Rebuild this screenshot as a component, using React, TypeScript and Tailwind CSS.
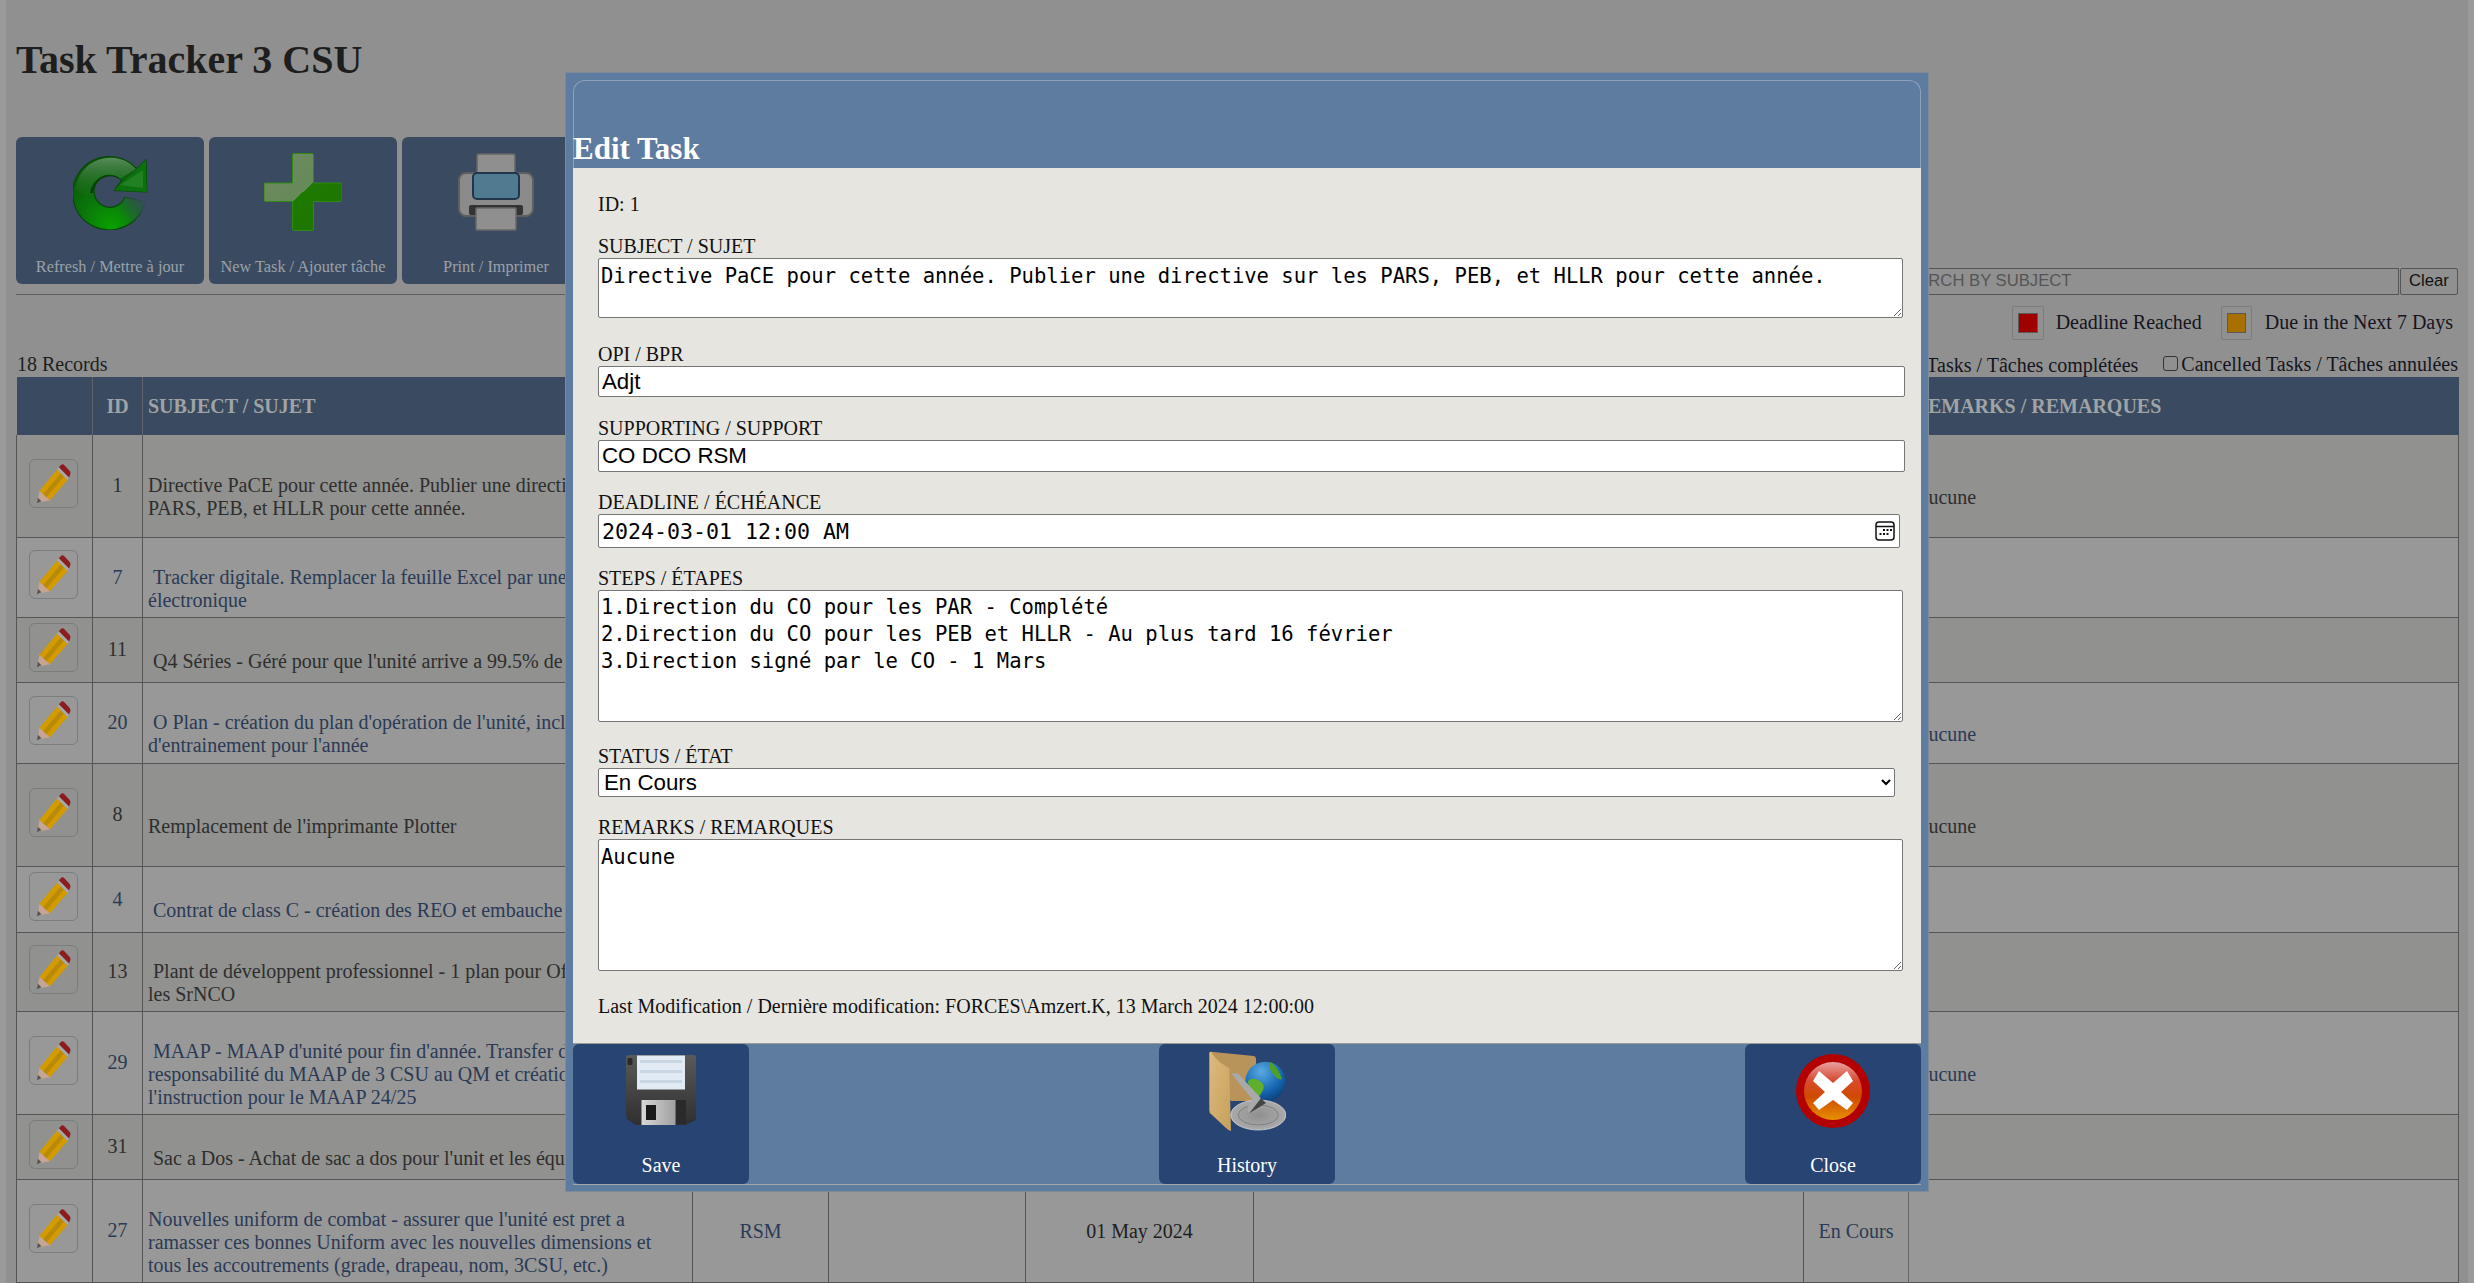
import React from "react";

const serif = "font-['Liberation_Serif',serif]";

function Pencil() {
  return (
    <svg viewBox="15 15 148 148" className="w-full h-full">
      <polygon points="38,150 45,112 78,142" fill="#c7a594" />
      <polygon points="37,151 40,134 51,145" fill="#55524f" />
      <polygon points="45,112 100,45 133,78 78,142" fill="#d49b00" />
      <polygon points="57,122 112,57 122,67 67,132" fill="#b98a05" />
      <polygon points="100,45 106,38 138,70 133,78" fill="#a8a8a6" />
      <path d="M106 38 L113 30 Q118 26 124 32 L140 50 Q145 56 141 62 L138 70 Z" fill="#8c1c1e" />
    </svg>
  );
}

function Refresh() {
  const shape = "M63.7 13.7 A36.7 36.7 0 1 0 72 47 L52 42 A16 16 0 1 1 48.7 25.3 L41.3 35.3 L73.7 37 L73 4.7 Z";
  return (
    <svg viewBox="0 0 75 75" className="w-[75px] h-[75px]">
      <defs>
        <radialGradient id="rf" gradientUnits="userSpaceOnUse" cx="38" cy="72" r="62">
          <stop offset="0" stopColor="#0aa000" />
          <stop offset="0.45" stopColor="#0a7a0a" />
          <stop offset="1" stopColor="#0b560b" />
        </radialGradient>
        <linearGradient id="rg" x1="0" y1="0" x2="0" y2="1">
          <stop offset="0" stopColor="#9ab89a" stopOpacity="0.55" />
          <stop offset="1" stopColor="#2a7a2a" stopOpacity="0.1" />
        </linearGradient>
        <linearGradient id="rfade" gradientUnits="userSpaceOnUse" x1="48" y1="62" x2="74" y2="44">
          <stop offset="0" stopColor="#3a4b61" stopOpacity="0" />
          <stop offset="1" stopColor="#3a4b61" stopOpacity="1" />
        </linearGradient>
      </defs>
      <path d={shape} fill="url(#rf)" stroke="#074a07" strokeWidth="1.2" strokeLinejoin="round" />
      <path d="M63 14 A35 35 0 0 0 2.5 34 C10 40 15 41 20 41 A16.5 16.5 0 0 1 47 24 Z" fill="url(#rg)" />
      <path d="M20 38 A17 17 0 0 1 47.5 25 L45 22 A20 20 0 0 0 17 38 Z" fill="#0a3d0a" />
      <path d="M41.3 35.3 L73.7 37 L73 4.7 Z" fill="#0c7010" />
      <path d="M47 30 L70 15 L70 33 Z" fill="#2f8a2f" opacity="0.6" />
      <path d="M52 42 L74 46 A37 37 0 0 1 50 72 L46 55 Z" fill="url(#rfade)" />
    </svg>
  );
}

function Plus() {
  return (
    <svg viewBox="0 0 78 78" className="w-[78px] h-[78px]">
      <defs>
        <linearGradient id="pl" x1="0" y1="0" x2="1" y2="1">
          <stop offset="0" stopColor="#6f8a66" />
          <stop offset="0.5" stopColor="#668a58" />
          <stop offset="0.5" stopColor="#1f7a00" />
          <stop offset="1" stopColor="#1c7400" />
        </linearGradient>
      </defs>
      <path d="M30 0.5 H48 a1.5 1.5 0 0 1 1.5 1.5 V30 H77 a1 1 0 0 1 1 1 V47 a1.5 1.5 0 0 1 -1.5 1.5 H49.5 V76 a1.5 1.5 0 0 1 -1.5 1.5 H30 a1.5 1.5 0 0 1 -1.5 -1.5 V48.5 H1.5 a1.5 1.5 0 0 1 -1.5 -1.5 V31 a1 1 0 0 1 1 -1 H28.5 V2 a1.5 1.5 0 0 1 1.5 -1.5 Z" fill="url(#pl)" stroke="#2e8a12" strokeWidth="1" />
    </svg>
  );
}

function Printer() {
  return (
    <svg viewBox="0 0 76 78" className="w-[76px] h-[78px]">
      <rect x="19" y="1" width="38" height="24" rx="2" fill="#8f8f8f" stroke="#666" strokeWidth="1.5" />
      <rect x="1" y="20" width="74" height="43" rx="7" fill="#8b8b8b" stroke="#5f5f5f" strokeWidth="2" />
      <rect x="15" y="20" width="46" height="26" rx="4" fill="#4f7a90" stroke="#20364a" strokeWidth="2" />
      <rect x="11" y="52" width="54" height="10" rx="2" fill="#333" />
      <rect x="18" y="55" width="40" height="22" rx="1" fill="#8f8f8f" stroke="#6a6a6a" strokeWidth="1.5" />
    </svg>
  );
}

function Floppy() {
  return (
    <svg viewBox="0 0 70 72" className="w-[70px] h-[72px]">
      <defs>
        <linearGradient id="fl" x1="0" y1="0" x2="0" y2="1">
          <stop offset="0" stopColor="#5a5a5a" />
          <stop offset="1" stopColor="#2f2f2f" />
        </linearGradient>
        <linearGradient id="sh" x1="0" y1="0" x2="1" y2="0">
          <stop offset="0" stopColor="#d8d8d8" />
          <stop offset="1" stopColor="#a0a0a0" />
        </linearGradient>
      </defs>
      <path d="M3 0 H68 a2 2 0 0 1 2 2 V63 a3 3 0 0 1 -2 3 L59 70 H10 L1 64 L0 60 V3 a3 3 0 0 1 3 -3 Z" fill="url(#fl)" />
      <rect x="11" y="0.5" width="48" height="34" fill="#e2ebf4" />
      <rect x="14" y="5" width="42" height="3" fill="#c8d6e4" />
      <rect x="14" y="15" width="42" height="3" fill="#c8d6e4" />
      <rect x="14" y="25" width="42" height="3" fill="#c8d6e4" />
      <rect x="15.5" y="45" width="34" height="25" fill="url(#sh)" />
      <rect x="50" y="45" width="10" height="24" fill="#2a2a2a" />
      <rect x="20" y="50" width="10" height="15" fill="#1a1a1a" />
      <rect x="1.5" y="3" width="5" height="7" rx="1" fill="#2a2a2a" />
    </svg>
  );
}

function HistoryIcon() {
  return (
    <svg viewBox="0 0 78 80" className="w-[78px] h-[80px]">
      <defs>
        <linearGradient id="fo" x1="0" y1="0" x2="1" y2="1">
          <stop offset="0" stopColor="#dcbb7c" />
          <stop offset="1" stopColor="#c79f5c" />
        </linearGradient>
        <radialGradient id="gl" cx="0.4" cy="0.25" r="0.85">
          <stop offset="0" stopColor="#5aa9e2" />
          <stop offset="0.6" stopColor="#1466b0" />
          <stop offset="1" stopColor="#0a376a" />
        </radialGradient>
        <radialGradient id="di" cx="0.5" cy="0.5" r="0.6">
          <stop offset="0" stopColor="#8f8f8f" />
          <stop offset="0.8" stopColor="#a9a9a9" />
          <stop offset="1" stopColor="#dadada" />
        </radialGradient>
      </defs>
      <path d="M3 0.7 L46 5 Q48 5.5 48 8 L49 50 L23 50 L3 20 Z" fill="#b8935a" />
      <path d="M1.3 2.3 Q1 0.5 3 0.7 C6 6 12 12 21.3 17.3 L23 80 Q21 80 18 77 L3 63 Q1.3 62 1.3 59 Z" fill="url(#fo)" />
      <circle cx="57.3" cy="30.7" r="20" fill="url(#gl)" />
      <path d="M40 30 C44 26 50 28 53 31 C58 35 55 40 52 44 C50 48 46 46 45 42 C44 38 40 36 40 30 Z" fill="#5fae2c" />
      <path d="M62 11 C68 14 72 22 74 28 C70 30 66 24 63 20 C61 17 60 14 62 11 Z" fill="#4fa028" />
      <ellipse cx="50.3" cy="64" rx="27.5" ry="15" fill="url(#di)" stroke="#d8d8d8" strokeWidth="0.8" />
      <ellipse cx="50.3" cy="64" rx="20" ry="10" fill="none" stroke="#777" strokeWidth="0.8" />
      <polygon points="23,22.3 29.7,22.3 53,47.3 41.3,62.3 39,58 44,48" fill="#a9a9a9" />
      <polygon points="41.3,62.3 53,47.3 58,52" fill="#454545" />
    </svg>
  );
}

function CloseIcon() {
  return (
    <svg viewBox="0 0 74 74" className="w-[74px] h-[74px]">
      <defs>
        <linearGradient id="cl" x1="0" y1="0" x2="0" y2="1">
          <stop offset="0" stopColor="#e8a0a0" />
          <stop offset="0.32" stopColor="#d84a30" />
          <stop offset="0.6" stopColor="#cf4a00" />
          <stop offset="1" stopColor="#e79000" />
        </linearGradient>
      </defs>
      <circle cx="37" cy="37" r="37" fill="#b30000" />
      <circle cx="37" cy="37" r="29" fill="url(#cl)" />
      <polygon points="23,17 37,29 51,17 57,27 45,38 57,49 51,56 37,46 23,56 17,49 29,38 17,27" fill="#ffffff" />
    </svg>
  );
}

function CalendarIcon() {
  return (
    <svg viewBox="0 0 20 20" className="w-[20px] h-[20px]">
      <rect x="1" y="1" width="18" height="18" rx="3" fill="none" stroke="#111" strokeWidth="1.5" />
      <line x1="1" y1="5.5" x2="19" y2="5.5" stroke="#111" strokeWidth="1.5" />
      <g fill="#111">
        <rect x="8" y="8" width="2" height="2" />
        <rect x="11.5" y="8" width="2" height="2" />
        <rect x="15" y="8" width="2" height="2" />
        <rect x="4.5" y="12" width="2" height="2" />
        <rect x="8" y="12" width="2" height="2" />
        <rect x="11.5" y="12" width="2" height="2" />
      </g>
    </svg>
  );
}

type Row = { id: number; h: string; lines: string[]; navy?: boolean; remark?: boolean; alt?: boolean };

const rows: Row[] = [
  { id: 1, h: "h-[102px]", lines: ["Directive PaCE pour cette année. Publier une directive sur les", "PARS, PEB, et HLLR pour cette année."], remark: true },
  { id: 7, h: "h-[80px]", navy: true, alt: true, lines: ["\u00a0Tracker digitale. Remplacer la feuille Excel par une feuille", "électronique"] },
  { id: 11, h: "h-[65px]", lines: ["\u00a0Q4 Séries - Géré pour que l'unité arrive a 99.5% de"] },
  { id: 20, h: "h-[81px]", navy: true, alt: true, remark: true, lines: ["\u00a0O Plan - création du plan d'opération de l'unité, incluant le plan", "d'entrainement pour l'année"] },
  { id: 8, h: "h-[103px]", remark: true, lines: ["Remplacement de l'imprimante Plotter"] },
  { id: 4, h: "h-[66px]", navy: true, alt: true, lines: ["\u00a0Contrat de class C - création des REO et embauche"] },
  { id: 13, h: "h-[79px]", lines: ["\u00a0Plant de développent professionnel - 1 plan pour Officiers et", "les SrNCO"] },
  { id: 29, h: "h-[103px]", navy: true, alt: true, remark: true, lines: ["\u00a0MAAP - MAAP d'unité pour fin d'année. Transfer de la", "responsabilité du MAAP de 3 CSU au QM et création de", "l'instruction pour le MAAP 24/25"] },
  { id: 31, h: "h-[65px]", lines: ["\u00a0Sac a Dos - Achat de sac a dos pour l'unit et les équipes"] },
  { id: 27, h: "h-[103px]", navy: true, alt: true, lines: ["Nouvelles uniform de combat - assurer que l'unité est pret a", "ramasser ces bonnes Uniform avec les nouvelles dimensions et", "tous les accoutrements (grade, drapeau, nom, 3CSU, etc.)"] },
];

function Tile({ label, children }: { label: string; children: React.ReactNode }) {
  return (
    <div className="w-[188px] h-[147px] shrink-0 rounded-[6px] bg-[#3a4b61] flex flex-col items-center pt-[15px]">
      <div className="h-[80px] flex items-center justify-center">{children}</div>
      <div className="mt-[26px] text-[16.3px] leading-[18px] text-[#9ba1a9] whitespace-nowrap">{label}</div>
    </div>
  );
}

function ModalButton({ label, children }: { label: string; children: React.ReactNode }) {
  return (
    <div className="w-[176px] h-[140px] rounded-[6px] bg-[#274472] flex flex-col items-center text-white">
      <div className="h-[94px] flex items-center justify-center">{children}</div>
      <div className="mt-[16px] text-[20px] leading-[23px]">{label}</div>
    </div>
  );
}

const fieldBorder = "block border border-[#767676] rounded-[2px] bg-white text-black outline-none";
const mono = "font-['DejaVu_Sans_Mono',monospace] text-[20.55px] leading-[27px]";
const sans = "font-['Liberation_Sans',sans-serif] text-[22.3px]";

function Label({ text, mt }: { text: string; mt: string }) {
  return <div className={`${mt} text-[20px] leading-[23px] text-[#111]`}>{text}</div>;
}

export default function App() {
  return (
    <div className={`${serif} relative h-screen overflow-hidden bg-[#9a9a9a]`}>
      <div className="mx-[6px] h-full overflow-hidden bg-[#909090] px-[10px] text-[20px]">
        <h1 className="h-[137px] pt-[37px] text-[40px] leading-[46px] font-bold text-[#1e1e1e]">Task Tracker 3 CSU</h1>

        <div className="flex h-[240px] justify-between">
          <div className="flex flex-col">
            <div className="flex gap-[5px] w-[1700px]">
              <Tile label="Refresh / Mettre à jour"><Refresh /></Tile>
              <Tile label="New Task / Ajouter tâche"><Plus /></Tile>
              <Tile label="Print / Imprimer"><Printer /></Tile>
            </div>
            <div className="mt-[10px] h-px bg-[#5f5f5f]" />
            <div className="mt-auto mb-[2px] w-fit pl-[1px] leading-[22px] text-[#1e1e1e]">18 Records</div>
          </div>

          <div className="flex flex-col items-end justify-end text-[#15151f]">
            <div className="flex items-stretch">
              <div className="w-[508px] h-[27px] border border-[#555] pl-[3px] font-['Liberation_Sans',sans-serif] text-[16.67px] leading-[23px] text-[#555]">SEARCH BY SUBJECT</div>
              <div className="ml-[1px] w-[58px] h-[27px] border border-[#555] rounded-[2px] text-center font-['Liberation_Sans',sans-serif] text-[16.67px] leading-[24px] text-[#111]">Clear</div>
            </div>
            <div className="mt-[11px] mr-[5px] flex items-center h-[34px]">
              <div className="w-[32px] h-[34px] border border-[#7c7c7c] rounded-[2px] flex items-center justify-center">
                <div className="w-[20px] h-[20px] bg-[#a00000] border border-[#5a5a5a]" />
              </div>
              <span className="ml-[12px] mb-[2px] leading-[23px]">Deadline Reached</span>
              <div className="ml-[19px] w-[31px] h-[34px] border border-[#7c7c7c] rounded-[2px] flex items-center justify-center">
                <div className="w-[19px] h-[20px] bg-[#a87000] border border-[#5a5a5a]" />
              </div>
              <span className="ml-[13px] mb-[2px] leading-[23px]">Due in the Next 7 Days</span>
            </div>
            <div className="mt-[13px] flex items-center leading-[23px]">
              <span className="mr-[25px]">Completed Tasks / Tâches complétées</span>
              <span className="w-[15px] h-[15px] mb-[3px] border border-[#333] rounded-[3px] mr-[3px]" />
              <span className="mb-[1px]">Cancelled Tasks / Tâches annulées</span>
            </div>
          </div>
        </div>

        <table className="w-[2442px] table-fixed border-collapse leading-[23px]">
          <colgroup>
            <col className="w-[76px]" />
            <col className="w-[50px]" />
            <col className="w-[550px]" />
            <col className="w-[136px]" />
            <col className="w-[197px]" />
            <col className="w-[228px]" />
            <col className="w-[550px]" />
            <col className="w-[105px]" />
            <col className="w-[550px]" />
          </colgroup>
          <thead>
            <tr className="h-[58px] bg-[#3a4b61] text-[#a0a3a6] font-bold">
              <th className="border-r border-[#5f656d]" />
              <th className="border-r border-[#5f656d] text-center font-bold">ID</th>
              <th className="pl-[5px] text-left font-bold">SUBJECT / SUJET</th>
              <th colSpan={5} />
              <th className="pl-[5px] text-left font-bold">REMARKS / REMARQUES</th>
            </tr>
          </thead>
          <tbody>
            {rows.map((r) => (
              <tr key={r.id} className={`${r.h} ${r.alt ? "bg-[#989898]" : "bg-[#91918f]"} ${r.navy ? "text-[#2b3a55]" : "text-[#2e2e2e]"} border-b border-[#555]`}>
                <td className="border-l border-r border-[#555] align-middle">
                  <div className="ml-[12px] mb-[5px] w-[49px] h-[49px] rounded-[6px] border border-[#7c7c7c]">
                    <Pencil />
                  </div>
                </td>
                <td className="border-r border-[#555] text-center">{r.id}</td>
                <td className="border-r border-[#555] pl-[5px] whitespace-nowrap overflow-hidden">
                  <br />
                  {r.lines.map((l, i) => (
                    <React.Fragment key={i}>
                      {i > 0 && <br />}
                      {l}
                    </React.Fragment>
                  ))}
                </td>
                <td className="border-r border-[#555] pt-[2px] text-center">{r.id === 27 ? "RSM" : ""}</td>
                <td className="border-r border-[#555]" />
                <td className="border-r border-[#555] pt-[2px] text-center text-[#1e1e1e]">{r.id === 27 ? "01 May 2024" : ""}</td>
                <td className="border-r border-[#555]" />
                <td className="border-r border-[#666] pt-[2px] text-center">{r.id === 27 ? "En Cours" : ""}</td>
                <td className="border-r border-[#555] pl-[5px]">
                  {r.remark ? (
                    <>
                      <br />
                      Aucune
                    </>
                  ) : null}
                </td>
              </tr>
            ))}
          </tbody>
        </table>
      </div>

      <div className="absolute left-[565px] top-[72px] w-[1364px] h-[1120px] bg-[#5e7ba0] border border-[#7f8a98] p-[7px] pb-[8px] flex flex-col">
        <div className="h-[88px] shrink-0 rounded-t-[12px] border border-b-0 border-[#8ea2bc] flex items-end">
          <h2 className="-ml-px mb-[2px] text-[31px] leading-[34px] font-bold text-white">Edit Task</h2>
        </div>
        <div className="h-[876px] shrink-0 bg-[#e6e5e0] border-b border-[#9a9a9a] pl-[25px] pt-[25px] text-[#111] text-[20px]">
          <div className="leading-[23px]">ID: 1</div>
          <Label text="SUBJECT / SUJET" mt="mt-[19px]" />
          <textarea
            readOnly
            className={`${fieldBorder} ${mono} w-[1305px] h-[60px] pl-[2px] pt-[4px] resize-y overflow-hidden`}
            defaultValue="Directive PaCE pour cette année. Publier une directive sur les PARS, PEB, et HLLR pour cette année."
          />
          <Label text="OPI / BPR" mt="mt-[25px]" />
          <input readOnly className={`${fieldBorder} ${sans} w-[1307px] h-[31px] pl-[3px]`} defaultValue="Adjt" />
          <Label text="SUPPORTING / SUPPORT" mt="mt-[20px]" />
          <input readOnly className={`${fieldBorder} ${sans} w-[1307px] h-[32px] pl-[3px]`} defaultValue="CO DCO RSM" />
          <Label text="DEADLINE / ÉCHÉANCE" mt="mt-[19px]" />
          <div className="relative w-[1302px]">
            <input readOnly className={`${fieldBorder} font-['DejaVu_Sans_Mono',monospace] text-[21.6px] w-full h-[34px] pl-[3px]`} defaultValue="2024-03-01 12:00 AM" />
            <div className="absolute right-[5px] top-[7px]"><CalendarIcon /></div>
          </div>
          <Label text="STEPS / ÉTAPES" mt="mt-[19px]" />
          <textarea
            readOnly
            className={`${fieldBorder} ${mono} w-[1305px] h-[132px] pl-[2px] pt-[3px] resize-y overflow-hidden`}
            defaultValue={"1.Direction du CO pour les PAR - Complété\n2.Direction du CO pour les PEB et HLLR - Au plus tard 16 février\n3.Direction signé par le CO - 1 Mars"}
          />
          <Label text="STATUS / ÉTAT" mt="mt-[23px]" />
          <select className={`${fieldBorder} ${sans} w-[1297px] h-[29px] pl-[1px]`} defaultValue="En Cours">
            <option>En Cours</option>
          </select>
          <Label text="REMARKS / REMARQUES" mt="mt-[19px]" />
          <textarea
            readOnly
            className={`${fieldBorder} ${mono} w-[1305px] h-[132px] pl-[2px] pt-[4px] resize-y overflow-hidden`}
            defaultValue="Aucune"
          />
          <div className="mt-[24px] leading-[23px]">Last Modification / Dernière modification: FORCES\Amzert.K, 13 March 2024 12:00:00</div>
        </div>
        <div className="h-[141px] shrink-0 border-b border-[#a5a5a5] flex justify-between">
          <ModalButton label="Save"><Floppy /></ModalButton>
          <ModalButton label="History"><HistoryIcon /></ModalButton>
          <ModalButton label="Close"><CloseIcon /></ModalButton>
        </div>
      </div>
    </div>
  );
}
